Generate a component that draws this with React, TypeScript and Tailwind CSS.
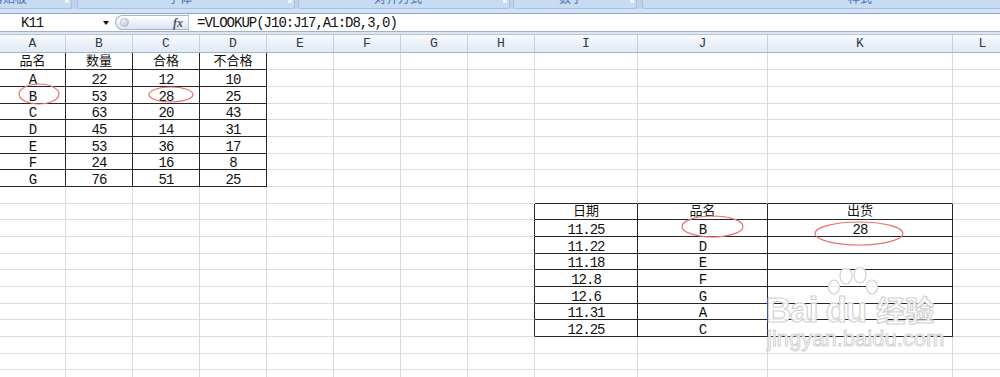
import React from 'react';

const cols = ['A', 'B', 'C', 'D', 'E', 'F', 'G', 'H', 'I', 'J', 'K', 'L'];

const cells: Record<number, string[]> = {
  1: ['品名', '数量', '合格', '不合格'],
  2: ['A', '22', '12', '10'],
  3: ['B', '53', '28', '25'],
  4: ['C', '63', '20', '43'],
  5: ['D', '45', '14', '31'],
  6: ['E', '53', '36', '17'],
  7: ['F', '24', '16', '8'],
  8: ['G', '76', '51', '25'],
  10: ['', '', '', '', '', '', '', '', '日期', '品名', '出货'],
  11: ['', '', '', '', '', '', '', '', '11.25', 'B', '28'],
  12: ['', '', '', '', '', '', '', '', '11.22', 'D', ''],
  13: ['', '', '', '', '', '', '', '', '11.18', 'E', ''],
  14: ['', '', '', '', '', '', '', '', '12.8', 'F', ''],
  15: ['', '', '', '', '', '', '', '', '12.6', 'G', ''],
  16: ['', '', '', '', '', '', '', '', '11.31', 'A', ''],
  17: ['', '', '', '', '', '', '', '', '12.25', 'C', ''],
};

const rows = Array.from({ length: 20 }, (_, i) => i + 1);
const gridCols = 'grid grid-cols-[66px_67px_67px_67px_67px_67px_67px_67px_103px_130px_185px_60px]';

const isCjk = (s: string) => /[\u4e00-\u9fff]/.test(s);

const Cell = ({ r, c }: { r: number; c: number }) => {
  const value = cells[r]?.[c] || '';
  const leftTable = r >= 1 && r <= 8 && c <= 3;
  const blackR = leftTable || (r >= 10 && r <= 17 && c >= 7 && c <= 10);
  const blackB = leftTable || (r >= 9 && r <= 17 && c >= 8 && c <= 10);
  return (
    <div
      className={`flex h-full items-end justify-center border-r border-b ${
        blackR ? 'border-r-[#262626]' : 'border-r-[#d5dce8]'
      } ${blackB ? 'border-b-[#262626]' : 'border-b-[#d5dce8]'}`}
    >
      {value &&
        (isCjk(value) ? (
          <span className="pb-[1px] text-[13px] leading-[13px] text-[#111]">{value}</span>
        ) : (
          <span className="text-[14px] leading-[12px] tracking-[-1px] text-[#111]">{value}</span>
        ))}
    </div>
  );
};

const Ribbon = () => (
  <div className="bg-[#bcd2ee]">
    <div className="flex h-[9px] overflow-hidden">
      <div className="relative h-[9px] w-[72px] rounded-br-[3px] border-r border-b border-[#a8c2e4] bg-[#c7dbf3]">
        <span className="absolute top-[-6px] left-[-9px] text-[12px] leading-[12px] text-[#4a74b2]">剪贴板</span>
        <span className="absolute top-0 right-[2px] h-[3px] w-[4px] bg-[#eef4fb]" />
      </div>
      <div className="relative ml-[5px] h-[9px] w-[218px] rounded-b-[3px] border-x border-b border-[#a8c2e4] bg-[#c7dbf3]">
        <span className="absolute top-[-6px] left-[90px] text-[12px] leading-[12px] text-[#4a74b2]">字体</span>
        <span className="absolute top-0 right-[2px] h-[3px] w-[4px] bg-[#eef4fb]" />
      </div>
      <div className="relative ml-[3px] h-[9px] w-[212px] rounded-b-[3px] border-x border-b border-[#a8c2e4] bg-[#c7dbf3]">
        <span className="absolute top-[-6px] left-[75px] text-[12px] leading-[12px] text-[#4a74b2]">对齐方式</span>
        <span className="absolute top-0 right-[2px] h-[3px] w-[4px] bg-[#eef4fb]" />
      </div>
      <div className="relative ml-[3px] h-[9px] w-[124px] rounded-b-[3px] border-x border-b border-[#a8c2e4] bg-[#c7dbf3]">
        <span className="absolute top-[-6px] left-[45px] text-[12px] leading-[12px] text-[#4a74b2]">数字</span>
        <span className="absolute top-0 right-[2px] h-[3px] w-[4px] bg-[#eef4fb]" />
      </div>
      <div className="relative ml-[5px] h-[9px] flex-1 rounded-bl-[3px] border-l border-b border-[#a8c2e4] bg-[#c7dbf3]">
        <span className="absolute top-[-6px] left-[205px] text-[12px] leading-[12px] text-[#4a74b2]">样式</span>
      </div>
    </div>
    <div className="h-[5px] border-b border-[#8aa6cf] bg-[#d2e1f4]" />
  </div>
);

const FormulaBar = () => (
  <div className="flex h-[17px] bg-white">
    <div className="relative flex w-[115px] items-center">
      <span className="pl-[21px] text-[14px] leading-[14px] tracking-[-1px] text-[#111]">K11</span>
      <span className="absolute top-[7px] left-[103px] h-0 w-0 border-x-[3.5px] border-t-[4px] border-x-transparent border-t-[#111]" />
    </div>
    <div className="relative mt-[1px] flex h-[15px] w-[73px] items-center rounded-l-full border border-r-0 border-[#9fb4d2] bg-linear-to-b from-white to-[#dbe4f1]">
      <span className="ml-[4px] h-[9px] w-[9px] rounded-full border border-[#aeb8c6] bg-linear-to-br from-white to-[#b9c3d0]" />
      <span className="absolute right-[5px] font-['Liberation_Serif'] text-[12px] leading-[12px] font-bold text-[#4b5563] italic">
        fx
      </span>
    </div>
    <div className="flex flex-1 items-center border-l border-[#b8c8dc] pl-[8px]">
      <span className="text-[14px] leading-[14px] tracking-[-1px] text-[#111]">=VLOOKUP(J10:J17,A1:D8,3,0)</span>
    </div>
  </div>
);

const Watermark = () => (
  <div className="pointer-events-none absolute inset-0">
    <svg className="absolute top-[266px] left-[826px]" width="52" height="32" viewBox="0 0 52 32">
      <g fill="rgba(255,255,255,0.9)" stroke="#d2d2d2" strokeWidth="1.2">
        <ellipse cx="8" cy="21" rx="5.5" ry="7" />
        <ellipse cx="20" cy="10" rx="6" ry="8" />
        <ellipse cx="34" cy="9" rx="6" ry="8" />
        <ellipse cx="46" cy="21" rx="5.5" ry="7" />
      </g>
    </svg>
    <div className="absolute top-[292px] left-[766px] flex items-baseline font-['Liberation_Sans'] text-[35px] leading-[35px] font-bold text-white/90 [-webkit-text-stroke:1.2px_#d2d2d2]">
      <span className="tracking-[-1px]">Bai</span>
      <span className="ml-[8px] tracking-[-1px]">du</span>
      <span className="ml-[10px] font-['Noto_Sans_CJK_SC'] text-[29px] leading-[29px]">经验</span>
    </div>
    <div className="absolute top-[328px] left-[767px] font-['Liberation_Sans'] text-[22px] leading-[22px] text-white/90 [-webkit-text-stroke:1px_#d2d2d2]">
      jingyan.baidu.com
    </div>
  </div>
);

const Marks = () => (
  <svg className="pointer-events-none absolute inset-0" width="1000" height="377">
    <g fill="none" stroke="#e8706f" strokeWidth="1.2">
      <ellipse cx="39" cy="94" rx="20" ry="10" />
      <ellipse cx="171" cy="94.5" rx="22" ry="7.5" />
      <ellipse cx="712.5" cy="226.5" rx="30.5" ry="10.5" />
      <ellipse cx="859" cy="233.5" rx="44" ry="11.5" />
    </g>
  </svg>
);

export default function App() {
  return (
    <div className="relative h-[377px] w-[1000px] overflow-hidden bg-white font-['Liberation_Mono','Noto_Sans_CJK_SC',monospace]">
      <Ribbon />
      <FormulaBar />
      <div className="h-[4px] border-y border-t-[#9fb2cc] border-b-[#b7c6da] bg-[#dde5ef]" />
      <div className={`${gridCols} h-[18px] border-b border-[#9eb3cd] bg-linear-to-b from-[#f8fafd] to-[#e1e9f4]`}>
        {cols.map((c) => (
          <div key={c} className="flex items-center justify-center border-r border-[#c2d0e2] text-[13px] leading-[13px] text-[#2c3a4f]">
            {c}
          </div>
        ))}
      </div>
      {rows.map((r) => (
        <div key={r} className={`${gridCols} ${r === 1 || (r - 1) % 3 !== 0 ? 'h-[17px]' : 'h-[16px]'}`}>
          {cols.map((c, i) => (
            <Cell key={c} r={r} c={i} />
          ))}
        </div>
      ))}
      <Marks />
      <Watermark />
    </div>
  );
}
